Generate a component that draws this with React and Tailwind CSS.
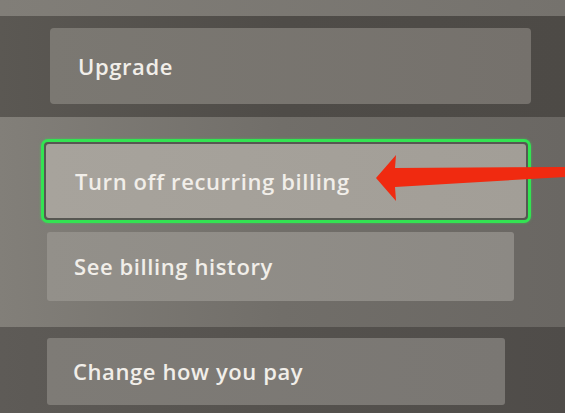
export default function App() {
  const label = "text-[22px] font-semibold text-[#f1eee9] tracking-[0.6px]"
  return (
    <div className="relative w-[565px] h-[413px] overflow-hidden bg-[#6f6c67]" style={{ fontFamily: '"Open Sans", "Liberation Sans", sans-serif' }}>
      <div className="h-[16px] bg-gradient-to-r from-[#817e78] to-[#75726d]" />

      <div className="h-[101px] pt-[12px] bg-gradient-to-r from-[#5b5853] via-[#4f4c48] to-[#4d4a46]">
        <div className="ml-[50px] w-[481px] h-[76px] rounded-[4px] bg-gradient-to-r from-[#7b7872] to-[#75716c] flex items-center pl-[28px]">
          <span className={label}>Upgrade</span>
        </div>
      </div>

      <div className="h-[210px] pt-[22px] bg-gradient-to-r from-[#827f79] via-[#716e69] to-[#6a6763]">
        <div className="ml-[41px] w-[490px] h-[84px] rounded-[7px] border-[3px] border-[#33e352] bg-[#575752] p-[2px] shadow-[0_0_3px_rgba(51,227,82,0.5)]">
          <div className="h-full rounded-[3px] bg-gradient-to-r from-[#a7a39c] to-[#a29e97] flex items-center pl-[29px]">
            <span className={label}>Turn off recurring billing</span>
          </div>
        </div>
        <div className="mt-[9px] ml-[47px] w-[467px] h-[69px] rounded-[3px] bg-gradient-to-r from-[#93908a] to-[#8c8984] flex items-center pl-[27px]">
          <span className={label}>See billing history</span>
        </div>
      </div>

      <div className="h-[86px] pt-[11px] bg-gradient-to-r from-[#5e5b57] via-[#55524e] to-[#4f4c49]">
        <div className="ml-[47px] w-[458px] h-[67px] rounded-[3px] bg-gradient-to-r from-[#7e7b76] to-[#7a7773] flex items-center pl-[26px]">
          <span className={label}>Change how you pay</span>
        </div>
      </div>

      <svg className="absolute left-0 top-0" width="565" height="413" viewBox="0 0 565 413">
        <path d="M376 178 L396 155 L395 168 L565 167 L565 177 L395 187 L396 201 Z" fill="#f02a10" />
      </svg>
    </div>
  )
}
